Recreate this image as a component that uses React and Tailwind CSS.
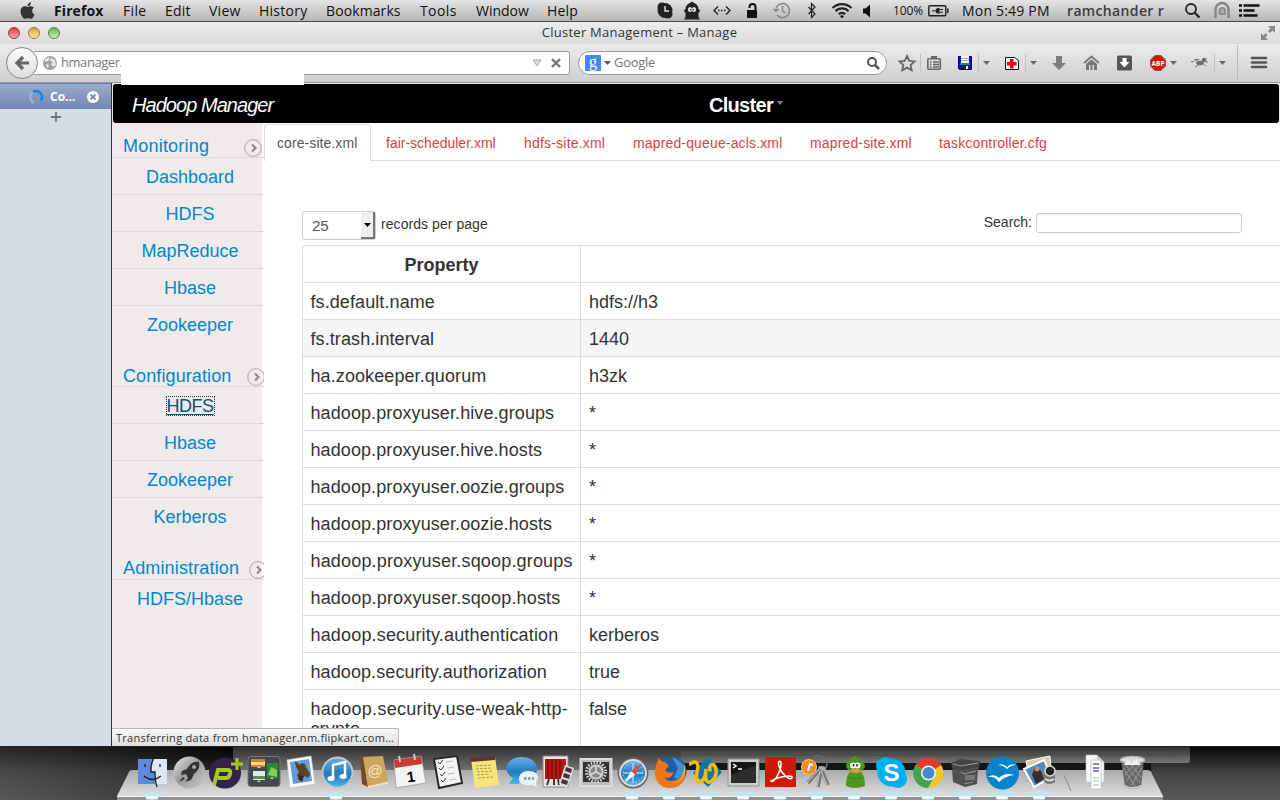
import React from 'react';
import { FaApple } from 'react-icons/fa';

const ui = "font-['Open_Sans','Noto_Sans',sans-serif]";
const body = "font-['Liberation_Sans',Arial,sans-serif]";

const menus = [
  ['File', 'w-[42px] tracking-[0.35px]'],
  ['Edit', 'w-[44px] tracking-[0.2px]'],
  ['View', 'w-[50px] tracking-[0.25px]'],
  ['History', 'w-[67px] tracking-[0.25px]'],
  ['Bookmarks', 'w-[94px] tracking-[0.1px]'],
  ['Tools', 'w-[56px] tracking-[0.4px]'],
  ['Window', 'w-[71px] tracking-[0px]'],
  ['Help', 'w-[110px] tracking-[0.2px]'],
];

function MenuBar() {
  return (
    <header className={`${ui} flex h-[22px] shrink-0 items-center border-b border-[#4a4a4a] bg-linear-to-b from-[#e4e4e4] to-[#b6b6b6] text-[14px] leading-[21px] text-[#111] whitespace-nowrap`}>
      <div className="w-[54px] pl-[18px]"><FaApple className="size-[19px] text-[#333]" /></div>
      <div className="w-[69px] font-bold tracking-[0.1px]">Firefox</div>
      {menus.map(([label, cls]) => <div key={label} className={cls}>{label}</div>)}
      <svg className="h-[21px] w-[236px] shrink-0" viewBox="657 0 236 21" fill="none" stroke="#222">
        <g stroke="none" fill="#222">
          <circle cx="662" cy="7" r="4.500" /><circle cx="668" cy="14" r="4.500" /><circle cx="665" cy="10.500" r="7.500" />
          <path d="M685.500 9a6.500 6.500 0 0 1 13 0l1.800 1.500-1.800 2.500v4l1.500 2.500h-16l1.500-2.500v-4l-1.800-2.500zM690 3l2-1.500L694 3z" />
        </g>
        <path d="M665 6v5h4" stroke="#ddd" strokeWidth="1.500" />
        <g fill="#eee" stroke="none"><ellipse cx="690" cy="9.500" rx="2" ry="2.500" /><ellipse cx="694" cy="9.500" rx="2" ry="2.500" /></g>
        <g fill="#222" stroke="none"><circle cx="690.500" cy="9.800" r=".8" /><circle cx="693.500" cy="9.800" r=".8" /></g>
        <path d="m718 6.500-4 4 4 4m8-8 4 4-4 4" strokeWidth="1.400" /><path d="M718 10.500h9" strokeWidth="1.500" strokeDasharray="1.500 1.500" />
        <rect x="747" y="10" width="10" height="8" fill="#111" stroke="none" /><path d="M755.500 10V7a3 3 0 0 0-6 0v1" stroke="#111" strokeWidth="2" />
        <g stroke="#858585" strokeWidth="1.500"><path d="M776 8a7 7 0 1 1 1 7M782.500 6v5l3 2" /><path d="m773 9 3 3 3-3z" fill="#858585" strokeWidth=".5" /></g>
        <path d="m808.500 7 6.500 7-3.500 3.500v-14L815 7l-6.500 7" strokeWidth="1.200" />
        <g strokeWidth="2.200"><path d="M832.500 8a13.500 13.500 0 0 1 19 0" /><path d="M835.500 11.200a9 9 0 0 1 13 0" /><path d="M838.700 14.200a5 5 0 0 1 6.600 0" /></g>
        <path d="m842 18.500-2-2.500q2-1.500 4 0z" fill="#111" stroke="none" />
        <path d="M863 8.500h2.500l4.500-4v13l-4.500-4H863z" fill="#111" stroke="none" />
      </svg>
      <div className="w-[34px] text-[12px] tracking-[-0.1px]">100%</div>
      <svg className="h-[21px] w-[35px] shrink-0" viewBox="0 0 35 21" fill="none">
        <rect x="1.800" y="5.800" width="17" height="10" rx="1" stroke="#222" strokeWidth="1.400" /><path d="M20.800 8.500v4.500" stroke="#222" strokeWidth="1.500" />
        <path d="M5 10.800h3.500M12.500 9.500H16M12.500 12.200H16" stroke="#222" /><path d="M12.500 7.800v6c-2.500 0-4-1-4-3s1.500-3 4-3z" fill="#222" />
      </svg>
      <div className="w-[105px] tracking-[0.2px]">Mon 5:49 PM</div>
      <div className="w-[118px] font-semibold tracking-[0.35px] text-[#3c3c3c]">ramchander r</div>
      <svg className="h-[21px] w-[80px] shrink-0" viewBox="1185 0 80 21" fill="none">
        <circle cx="1191" cy="9" r="5" stroke="#222" strokeWidth="1.800" /><path d="m1194.500 12.500 5 5" stroke="#222" strokeWidth="2.200" />
        <path d="M1215.500 18v-8.500a6.500 6.500 0 0 1 13 0V18" stroke="#888" strokeWidth="2.500" /><path d="M1219.500 14v-4a2.800 2.800 0 0 1 5.500 0v4z" fill="#aaa" stroke="#888" strokeWidth="1.700" />
        <path d="M1239 5.500h3m1.500 0h16M1239 10.500h3m1.500 0h11M1239 15.500h3m1.500 0h14" stroke="#111" strokeWidth="2.600" />
      </svg>
    </header>
  );
}

function TitleBar() {
  return (
    <div className={`${ui} flex h-[22px] shrink-0 items-center bg-linear-to-b from-[#ededed] to-[#dadada] pl-2 pr-1`}>
      <div className="flex w-[60px] gap-2">
        <i className="size-3 rounded-full border border-[#9e3b3b] bg-linear-to-b from-[#d63b3e] to-[#ffa5a0]" />
        <i className="size-3 rounded-full border border-[#a8712c] bg-linear-to-b from-[#e69b3c] to-[#ffe7a0]" />
        <i className="size-3 rounded-full border border-[#54823f] bg-linear-to-b from-[#71ac50] to-[#cff5b0]" />
      </div>
      <div className="grow text-center text-[13px] tracking-[0.26px] text-[#333]"><span className="pr-[49px]">Cluster Management – Manage</span></div>
      <svg className="h-4 w-[16px] shrink-0" viewBox="0 0 16 16" fill="#888"><path d="M8 1h7v7l-2.500-2.500L10 8 8 6l2.500-2.500zM1 8v7h7l-2.500-2.500L7.500 10l-2-2-2 2.500z" /></svg>
    </div>
  );
}

function ToolIcons() {
  return (
    <svg className="h-[39px] w-[394px] shrink-0" viewBox="886 44 394 39" fill="none">
      <path d="m907 56 2.300 4.800 5.200.6-3.900 3.600 1.100 5.200-4.700-2.600-4.700 2.600 1.100-5.200-3.900-3.600 5.200-.6z" stroke="#666" strokeWidth="1.800" />
      <path d="M920.500 54v18M978.500 54v18M1025.500 54v18M1214.500 54v18" stroke="#c3c3c3" />
      <rect x="927.800" y="58.800" width="12.500" height="10.500" rx="1" stroke="#666" strokeWidth="1.600" /><rect x="931" y="56" width="6" height="3" fill="#666" /><path d="M930 62h1.500m1.500 0h6M930 64.500h1.500m1.500 0h6M930 67h1.500m1.500 0h6" stroke="#666" strokeWidth="1.300" />
      <path d="M958.500 56.500h13v13h-12l-1-1z" fill="#0815c4" stroke="#000070" /><path d="M961 56h8v7h-8z" fill="#f3f3ef" /><path d="M961 58.500h8m-8 2h8" stroke="#aaa" /><path d="M960 63h10v2h-10z" fill="#158590" /><path d="M961 65h8v4h-8z" fill="#222" /><path d="M966 66h2v3h-2z" fill="#eee" />
      <path d="M1005.500 57.500h9l4 3v9h-13z" fill="#fff" stroke="#111" /><path d="M1010 59h3.500v3h3v3.500h-3v3H1010v-3h-3V62h3z" fill="#f00000" />
      <g fill="#6a6a6a"><path d="M983 61h7l-3.500 4zM1030 61h7l-3.500 4zM1170 61h7l-3.500 4zM1219 61h7l-3.500 4z" /><path d="M1056 56h6v7h4l-7 7-7-7h4z" fill="#7c7c7c" /></g>
      <path d="m1084 63 7.500-6.500 7.500 6.500" stroke="#777" strokeWidth="1.800" /><path d="m1086 64 5.500-4.500L1097 64v6h-3v-5h-1.500v5h-2v-5h-1.500v5h-3z" fill="#777" />
      <rect x="1117" y="55.500" width="15" height="15" rx="1.500" fill="#555" /><path d="M1122.500 58h4v4h3l-5 5.500-5-5.500h3z" fill="#fff" />
      <path d="M1155 55.500h6l4.500 4.500v6l-4.500 4.500h-6l-4.500-4.500v-6z" fill="#cc1c0a" stroke="#8e5048" /><text x="1158" y="66" fill="#fff" fontSize="6.500" fontWeight="700" textAnchor="middle" fontFamily="Open Sans, sans-serif">ABP</text>
      <g stroke="#777" strokeWidth="1"><ellipse cx="1200" cy="63" rx="3.500" ry="2" fill="#666" /><circle cx="1204" cy="60" r="2" fill="#555" stroke="none" /><path d="m1194 59.500 6 3 7-4m-3 3 4 .5m-7 1-6 4.500m8-4 3 3m-12-5h-3m4-2 4 0" /></g>
      <path d="M1237.500 45v36" stroke="#b7bcc4" /><path d="M1252 58h14m-14 4.500h14m-14 4.500h14" stroke="#555" strokeWidth="2.600" strokeLinecap="round" />
    </svg>
  );
}

function Toolbar() {
  return (
    <div className={`${ui} relative flex h-[39px] shrink-0 items-center border-b border-[#999] bg-linear-to-b from-[#ebebeb] to-[#cfcfcf] text-[13px]`}>
      <div className="z-1 ml-[6px] flex size-8 shrink-0 items-center justify-center rounded-full border border-[#858585] bg-linear-to-b from-[#fcfcfc] to-[#dedede]">
        <svg className="size-4" viewBox="0 0 16 16" fill="none" stroke="#666" strokeWidth="3.200"><path d="M9 2 3 8l6 6M3 8h12" /></svg>
      </div>
      <div className="-ml-[4px] flex h-[24px] w-[536px] shrink-0 items-center rounded-r-[3px] border border-l-0 border-[#9a9a9a] bg-white pl-[9px] text-[#777]">
        <svg className="mr-[4px] size-[14px]" viewBox="0 0 14 14"><circle cx="7" cy="7" r="7" fill="#a0a0a0" /><path d="M2 3q3-2 5-1L5 5 2 6zm6-1 4 2 1 5-3 2-2-3 2-2-3-1zM3 8l3 1-1 3-2-2z" fill="#e6e6e6" /></svg>
        <span className="w-[471px] tracking-[-0.45px]">hmanager.</span>
        <svg className="h-[14px] w-[34px] shrink-0" viewBox="0 0 34 14" fill="none"><path d="M1 4h8L5 10z" fill="#ddd" stroke="#aaa" /><path d="m20 3 8 8m0-8-8 8" stroke="#777" strokeWidth="2.400" /></svg>
      </div>
      <div className="ml-[8px] flex h-[24px] w-[309px] shrink-0 items-center rounded-full border border-[#9a9a9a] bg-white pl-[6px] text-[#757575]">
        <b className="flex size-4 items-center justify-center rounded-[1px] bg-[#4889f1] pb-[3px] font-['Liberation_Serif',serif] text-[16px] font-normal leading-4 text-white">g</b>
        <svg className="mx-[3px] h-2 w-[7px]" viewBox="0 0 7 8"><path d="M0 2h7L3.500 6z" fill="#555" /></svg>
        <span className="grow tracking-[-0.3px]">Google</span>
        <svg className="mr-[5px] size-4" viewBox="0 0 16 16" fill="none" stroke="#555" strokeWidth="2"><circle cx="7" cy="7" r="4" /><path d="m10 10 4 4" strokeWidth="2.500" /></svg>
      </div>
      <div className="-ml-px"><ToolIcons /></div>
      <div className="absolute left-[121px] top-[16px] z-2 h-[25px] w-[183px] bg-white" />
      <div className="absolute left-[132px] top-[8px] z-2 h-[12px] w-[180px] bg-white" />
    </div>
  );
}

function TabStrip() {
  return (
    <aside className={`${ui} w-[111px] shrink-0 bg-[#d4dce6]`}>
      <div className="flex h-[26px] items-center border-t border-[#6a7fae] bg-linear-to-b from-[#9aaacd] to-[#7386b2] pl-[28px] text-[12px] font-bold text-white">
        <svg className="mr-[6px] size-4" viewBox="0 0 16 16" fill="none" strokeWidth="2.500"><path d="M6 13.500A6 6 0 0 1 5 3" stroke="#91b2e3" /><path d="M5 3a6 6 0 0 1 8 8.500" stroke="#1583e9" /></svg>
        <span className="w-[37px]">Co...</span>
        <svg className="size-3" viewBox="0 0 12 12"><circle cx="6" cy="6" r="6" fill="#fff" /><path d="m3.500 3.500 5 5m0-5-5 5" stroke="#778ab5" strokeWidth="1.800" /></svg>
      </div>
      <div className="flex h-[16px] items-center justify-center"><svg className="size-[10px]" viewBox="0 0 10 10"><path d="M5 0v10M0 5h10" stroke="#777" strokeWidth="1.800" /></svg></div>
    </aside>
  );
}

const groups = [
  ['Monitoring', ['Dashboard', 'HDFS', 'MapReduce', 'Hbase', 'Zookeeper'], 'h-[35px]', '', 'tracking-[0.22px]'],
  ['Configuration', ['HDFS', 'Hbase', 'Zookeeper', 'Kerberos'], 'h-[44px]', '-mr-[3px]', 'tracking-[0.1px] relative top-px'],
  ['Administration', ['HDFS/Hbase'], 'h-[45px]', '-mr-[5px]', 'tracking-[0.15px]'],
];

function Sidebar() {
  return (
    <nav className="w-[152px] shrink-0 overflow-hidden bg-linear-to-r from-[#f0eaea] from-[150px] to-white to-[150px] text-[18px] text-[#0088cc]">
      {groups.map(([title, items, height, offset, tracking]) => (
        <section key={title}>
          <h2 className={`${height} flex items-end justify-between border-b border-[#dcdada] pl-[11px]`}>
            <span className={`${tracking} leading-[22px]`}>{title}</span>
            <svg className={`h-[18px] w-[20px] shrink-0 ${offset}`} viewBox="0 0 20 18" fill="none"><circle cx="9" cy="9" r="8.300" stroke="#b8b8b8" strokeWidth="1.300" /><path d="m8 5.500 3.500 3.500L8 12.500" stroke="#888" strokeWidth="2" /></svg>
          </h2>
          {items.map((item, i) => {
            const active = title === 'Configuration' && i === 0;
            return (
              <div key={item} className={`flex h-[37px] items-center justify-center pl-[4px] pt-[2px] ${i < items.length - 1 ? 'border-b border-[#dcdada]' : ''}`}>
                <a className={active ? '-mt-px text-[#005580] tracking-[-0.5px] underline decoration-1 underline-offset-2 outline-1 outline-dotted outline-[#333] leading-[18px]' : ''}>{item}</a>
              </div>
            );
          })}
        </section>
      ))}
    </nav>
  );
}

const wide = 'tracking-[0.17px]';
const rows = [
  ['fs.default.name', 'hdfs://h3'],
  ['fs.trash.interval', '1440'],
  ['ha.zookeeper.quorum', 'h3zk'],
  ['hadoop.proxyuser.hive.groups', '*'],
  ['hadoop.proxyuser.hive.hosts', '*'],
  ['hadoop.proxyuser.oozie.groups', '*'],
  ['hadoop.proxyuser.oozie.hosts', '*'],
  ['hadoop.proxyuser.sqoop.groups', '*', wide],
  ['hadoop.proxyuser.sqoop.hosts', '*', wide],
  ['hadoop.security.authentication', 'kerberos', wide],
  ['hadoop.security.authorization', 'true'],
  ['hadoop.security.use-weak-http-crypto', 'false'],
];

const tabs = [
  ['fair-scheduler.xml', 'w-[138px]'],
  ['hdfs-site.xml', 'w-[109px] tracking-[0.2px]'],
  ['mapred-queue-acls.xml', 'w-[177px] tracking-[0.15px]'],
  ['mapred-site.xml', 'w-[129px] tracking-[0.15px]'],
  ['taskcontroller.cfg', 'grow tracking-[0.16px]'],
];

function Content() {
  return (
    <main className="min-w-0 grow overflow-hidden bg-white text-[#333]">
      <div className="flex h-[38px] text-[14px] leading-[37px]">
        <div className="mt-px w-[107px] shrink-0 rounded-t border border-b-0 border-[#ddd] pl-[12px] tracking-[0.08px] text-[#555]">core-site.xml</div>
        <div className="flex grow border-b border-[#ddd] pl-[15px] pt-[2px] text-[#d9403f]">
          {tabs.map(([t, w]) => <a key={t} className={`h-[35px] ${w}`}>{t}</a>)}
        </div>
      </div>
      <div className="ml-[38px] mt-[49px] flex h-[35px] w-[940px] items-start justify-between text-[14px]">
        <label className="flex items-center pt-px">
          <span className="flex h-[29px] w-[74px] items-center justify-between rounded-[3px] border border-[#ccc] pl-[9px] text-[15px] text-[#555]"><span className="pt-[2px]">25</span>
            <span className="flex h-[27px] w-[14px] items-center justify-center border-b-2 border-r-2 border-[#777] bg-[#eee]"><svg className="h-[4px] w-[7px]" viewBox="0 0 7 4"><path d="M0 0h7L3.500 4z" fill="#000" /></svg></span>
          </span>
          <span className="-mt-[2px] ml-[5px] tracking-[0.06px]">records per page</span>
        </label>
        <label className="flex items-center pt-[2px]">Search:<span className="ml-[4px] h-[20px] w-[206px] rounded-[3px] border border-[#ccc] bg-white shadow-[inset_0_1px_1px_rgba(0,0,0,0.08)]" /></label>
      </div>
      <div className="-mr-2 ml-[38px] rounded-tl border-l border-t border-[#ddd] text-[18px] leading-[20px]">
        <div className="grid h-[36px] grid-cols-[277px_1fr] text-center font-bold"><div className="pt-[9px]">Property</div><div className="border-l border-[#ddd]" /></div>
        {rows.map(([name, value, spacing = 'tracking-[0.09px]'], i) => (
          <div key={name} className={`grid min-h-[37px] grid-cols-[277px_1fr] border-t border-[#ddd] ${i === 1 ? 'bg-[#f5f5f5]' : ''}`}>
            <div className={`whitespace-nowrap pb-[7px] pl-[7.500px] pt-[9px] ${spacing}`}>{i === 11 ? <><span className="tracking-[0.26px]">hadoop.security.use-weak-http-</span><br />crypto</> : name}</div>
            <div className="border-l border-[#ddd] pl-[8px] pt-[9px]">{value}</div>
          </div>
        ))}
      </div>
    </main>
  );
}

/* Dock artwork: every icon sits on a 37x53 cell centred at 18.5,26 */
const dockIcons = [
  <><rect x="4" y="12" width="29" height="25" rx="1" fill="#dfe7f5" /><path d="M4 12h16q-3 8-2 13h3v12H4z" fill="#5d8bdb" /><path d="M21 9q-5 8-4 16h4q0 9 2 15M10 29q8 7 17 0M11 17v3M26 17v3" fill="none" stroke="#222" strokeWidth="1.300" /></>,
  <><circle cx="18.500" cy="25.500" r="16" fill="url(#metal)" /><path d="M28 15c-6-1-10 3-12 7l-5 2-1 4 5-1 2 4-3 4 6-2 3-6c5-4 6-7 5-12zm-16 15-4 5 6-3z" fill="#333" /><circle cx="23" cy="20" r="2" fill="#aaa" /></>,
  <><ellipse cx="17" cy="26" rx="16" ry="15.500" fill="#33224c" /><path d="m6 38 4-15h10q3 0 2 4t-4 4h-8" fill="none" stroke="#a6c72c" strokeWidth="4" /><path d="M29 11v12m-6-6h12" stroke="#a6c72c" strokeWidth="3" /></>,
  <><rect x="3" y="9.500" width="32" height="30" rx="3" fill="#444950" stroke="#777" /><rect x="6" y="12" width="14" height="8" fill="#e27b21" /><path d="M6 15h14v3H6z" fill="#f5d69b" /><rect x="22" y="16" width="11" height="15" fill="#238b32" /><path d="m23 28 3-8 6 3v7z" fill="#8acb59" /><rect x="8" y="24" width="12" height="9" fill="#dfeae7" /><path d="M8 29h12v3H8z" fill="#54914d" /><path d="m12 21 2-2 2 2zm0 14 2-2 2 2zm13-3 2-2 2 2z" fill="#ccc" /></>,
  <><path d="m5 13 24-4 4 28-25 4z" fill="#fafafa" stroke="#ccc" strokeDasharray="2 1" /><path d="m8 15 19-3 3 22-19 3z" fill="#669bd7" /><path d="m13 14 5 4 2-2 3 1 1 3 4 7-2 4-4-2-6 2-1-3 2-3-3-5z" fill="#5c4228" /><path d="m17 28 5 1-2 6-4-3z" fill="#342b20" /></>,
  <><circle cx="18.500" cy="25.500" r="15" fill="url(#blue)" stroke="#c1c4ca" strokeWidth="2" /><path d="M14 31V18l12-3v14" fill="none" stroke="#fff" strokeWidth="2.500" /><ellipse cx="12" cy="31.500" rx="3.500" ry="2.500" fill="#fff" /><ellipse cx="24" cy="29.500" rx="3.500" ry="2.500" fill="#fff" /></>,
  <><path d="m4 10 3-1 5 31-6-3z" fill="#744a23" /><path d="m7 10 20-1 5 25-20 6z" fill="#d1a45b" /><path d="m12 39 20-4v2l-20 4z" fill="#eee2c2" /><text x="19" y="29" textAnchor="middle" fontSize="15" fill="#f4e8d0" fontFamily="Liberation Sans">@</text></>,
  <><path d="m1 13 27-4 5 27-30 5z" fill="#f4f4f4" stroke="#aaa" /><path d="m1 13 27-4 1 8-27 4z" fill="#c63d36" /><path d="m6 9 1 6m14-8 1 6" stroke="#ccc" strokeWidth="2" /><text x="18" y="35" textAnchor="middle" fontSize="15" fontWeight="700" transform="rotate(-8 18 30)" fontFamily="Liberation Sans">1</text></>,
  <><path d="m4 12 23-3 5 27-23 5z" fill="#f4f4f4" stroke="#292929" strokeWidth="2" /><path d="m8 15 2 2 3-4M9 21l2 2 3-4M10 27l2 2 3-4M11 33l2 2 3-4" fill="none" stroke="#333" /><path d="m16 15 7-1m-6 7 7-1m-6 7 7-1m-6 7 7-1" stroke="#bbb" /></>,
  <><path d="m4 12 24-2 4 28-24 3z" fill="#f5e57d" /><path d="m3 11 25-2v4L4 15z" fill="#63352a" /><path d="m9 19 16-1m-16 4 16-1m-15 4 15-1m-15 4 11-1m-10 4 15-1" stroke="#aea04b" strokeDasharray="3 1" /></>,
  <><path d="M17 10c11 0 16 6 16 12s-6 11-14 11l-5 4H5l4-6C-2 25 1 11 17 10z" fill="url(#blue)" /><path d="M24 24c7 0 10 3 10 7l-2 5 1 4-5-2c-7 1-13-1-13-6s4-8 9-8z" fill="#e4f3fb" /><path d="M20 31.500h10" stroke="#7994a7" strokeWidth="2.500" strokeDasharray="2.500 1.500" /></>,
  <><path d="M2 9h25v31H2z" fill="#e6e6e6" stroke="#888" /><path d="M4 12h21v20H4z" fill="#b51912" /><path d="M7 12v20m4-20v20m4-20v20m4-20v20" stroke="#7d0d08" strokeWidth="1.500" /><path d="m8 32-2 6m7-6v6m4-6 1 6" stroke="#493528" strokeWidth="2" /><path d="m24 18 9 3-7 20-8-4z" fill="#ddd" /><path d="m25 20 6 2-1 4-6-2zm-2 6 6 2-1 4-6-2zm-2 6 6 2-1 4-6-2z" fill="#48312e" /></>,
  <><rect x="2.500" y="12" width="31" height="27" fill="#b9bdbf" stroke="#ddd" strokeWidth="2" /><rect x="5" y="15" width="26" height="20" fill="#333" /><circle cx="18" cy="25" r="9.500" fill="none" stroke="#ddd" strokeWidth="3" strokeDasharray="1.500 1.500" /><circle cx="18" cy="25" r="8" fill="#ccc" stroke="#777" /><circle cx="18" cy="25" r="5.500" fill="#888" /><path d="M18 25v-6m0 6 6 3m-6-3-6 3" stroke="#ddd" strokeWidth="1.500" /></>,
  <><circle cx="18" cy="26" r="14.700" fill="#ddd" stroke="#666" strokeWidth="1.500" /><circle cx="18" cy="26" r="12" fill="url(#blue)" /><circle cx="18" cy="26" r="10" fill="none" stroke="#d5e9f7" strokeDasharray="1 3" /><path d="M18 16v20M8 26h20" stroke="#a9d1ef" strokeWidth="1.500" /><path d="m27 16-7 12-4-4z" fill="#e5482d" /><path d="m9 36 7-12 4 4z" fill="#fff" /></>,
  <><circle cx="20" cy="24" r="14.500" fill="#1b60a5" /><path d="M20 10q8 3 13 10c1 6 0 12-3 15l-8-5 4-9z" fill="#4293d3" /><path d="m5 16 2-5q2 4 6 4l4 4-4 4q3 4 8 2c0 7-9 7-9 4 3 9 19 5 20-6C36 35 27 41 18 41 6 41-1 29 5 16z" fill="#ee7518" /><path d="M32 17c4 12-4 19-12 19q10-1 12-12z" fill="#f9c33b" /></>,
  <><path d="m18 10 15 15-14 15L4 26z" fill="#1374a9" /><path d="M1 17c6-4 8-1 8 3-1 5-3 13 0 15q7 1 8-13c-1 10 0 14 4 13q7-4 6-12c-1-9-8-5-6 0" fill="none" stroke="#f1bb13" strokeWidth="3.500" strokeLinecap="round" /></>,
  <><path d="M2 12h31v27H2z" fill="#ccc" stroke="#909090" /><path d="M5 15h25v21H5z" fill="#151515" /><path d="M5 28 30 18v18H5z" fill="#2d2d2d" /><path d="m7 17 3 2-3 2m5 1h4" fill="none" stroke="#fff" strokeWidth="1.500" /></>,
  <><path d="M2 10h31v30H2z" fill="#cf1908" /><path d="M8 34c3 3 10-10 10-17 0-4-4-4-2 2 2 7 10 15 13 12 2-4-15-1-21 3z" fill="none" stroke="#fff" strokeWidth="1.500" /></>,
  <><path d="M12 18C10 6 25 6 27 16c0 7-7 9-8 3" fill="none" stroke="#666" strokeWidth="1.800" /><circle cx="9" cy="20" r="7.500" fill="#f28b23" stroke="#ffc072" /><path d="m8 24 2-7 3 1" fill="none" stroke="#fff" strokeWidth="2" /><circle cx="22" cy="23" r="4" fill="#aaa" /><path d="m20 22-12 14m13-12-3 16m4-16 6 14" stroke="#777" strokeWidth="3.500" /><path d="m19 22-12 14m13-12-3 16m4-16 6 14" stroke="#ccc" /></>,
  <><path d="m18 9 4 3q6 2 6 8l-4 5q4 3 4 14-10 4-19 0 0-11 4-14l-4-5q0-6 5-8z" fill="#4d9624" /><path d="M12 30q6 4 13 0" fill="none" stroke="#387d18" /><circle cx="16" cy="18.500" r="3" fill="#fff" /><circle cx="20.500" cy="18.500" r="3" fill="#fff" /><path d="M16.500 17v2.500m3.500-2.500v2.500" stroke="#222" strokeWidth="1.500" /><path d="M12 24q6-5 13 0-6 4-13 0" fill="#df994a" /></>,
  <><circle cx="11" cy="19" r="9" fill="#00aff0" /><circle cx="24" cy="32" r="9" fill="#00aff0" /><circle cx="17.500" cy="25.500" r="14" fill="#00aff0" /><text x="17.500" y="34" textAnchor="middle" fontSize="24" fontWeight="700" fill="#fff" fontFamily="Liberation Sans">S</text></>,
  <><circle cx="17.500" cy="26" r="15" fill="#f2c52e" /><path d="M17.500 26 4.500 18a15 15 0 0 1 26 0z" fill="#de3f31" /><path d="m17.500 26-13-8A15 15 0 0 0 17 41l5-9z" fill="#46a34b" /><circle cx="17.500" cy="26" r="7.500" fill="#f6f6f6" /><circle cx="17.500" cy="26" r="6" fill="#4289d1" /></>,
  <><path d="m3 16 9-4 20 2-1 8-21 2-6-3z" fill="#444" /><path d="m4 22 11 1 15-3-1 17-12 3-12-5z" fill="#505050" /><path d="m5 17 8 2 17-3m-17 9 3 2 12-3m-11 8 10-2m-11 7 9-2" fill="none" stroke="#999" /><path d="M17 28h10v5H17z" fill="#777" /></>,
  <><circle cx="17.500" cy="26" r="16.500" fill="#0784cd" /><path d="M13 18q5-2 9 2 4-4 9-2-5 0-9 4-4-4-9-4zM2 30q8-4 12 1 6-6 15-3-9 1-15 7-4-6-12-5z" fill="#fff" /></>,
  <><path d="m4 14 24-5 1 12-23 5z" fill="#d9caab" stroke="#fff" /><path d="m2 22 20-9 8 17-18 10z" fill="#568ac1" stroke="#fff" strokeWidth="2" /><path d="m10 28 3-8 6 4 3 8-8 5z" fill="#3b2c2b" /><circle cx="15" cy="22" r="2.500" fill="#c98d6c" /><path d="M22 24q6-2 11 0v11q-6 4-11 0z" fill="#777" /><circle cx="28" cy="24" r="5" fill="#222" stroke="#ddd" strokeWidth="1.500" /><path d="M23 32q5 3 9 0" fill="none" stroke="#ddd" strokeWidth="2" /></>,
];
const files = [
  <><path d="M9 8h11l7 7v20H9z" fill="#f7f7f7" stroke="#bbb" strokeWidth=".7" /><path d="M20 8v7h7z" fill="#ccc" /><path d="M14 13h10v29H14z" fill="#fff" stroke="#ccc" /><path d="M16 17h6m-6 4h6m-6 3h6" stroke="#6268a1" strokeWidth="1.500" /><path d="M16 31h6m-6 3h6m-6 4h6" stroke="#9bc0b8" /></>,
  <><path d="M7 13h23l-3 27q-8 4-16 0z" fill="#696969" /><path d="m10 16 16 20M14 14l13 16M9 21l12 18M27 16 12 34M22 15 11 28M28 21 17 39" stroke="#999" /><ellipse cx="18.500" cy="13" rx="12" ry="3.500" fill="#ddd" stroke="#aeb4bd" strokeWidth="1.500" /><path d="m10 18 3-5 5 3 4-4 5 6" fill="#eee" /><path d="M11 39q7 4 16 0" fill="none" stroke="#ccc" strokeWidth="2" /></>,
];
const Cell = ({ children }) => <svg className="h-[53px] w-[37px] shrink-0" viewBox="0 0 37 53">{children}</svg>;

function Dock() {
  return (
    <footer className="relative h-[53px] shrink-0 overflow-hidden bg-[#484848]">
      <svg className="absolute inset-0 h-[53px] w-[1280px]" viewBox="0 0 1280 53">
        <defs>
          <linearGradient id="desk" x2="0" y2="1"><stop stopColor="#070707" /><stop offset=".5" stopColor="#444" /><stop offset="1" stopColor="#595959" /></linearGradient>
          <linearGradient id="left"><stop stopColor="#555" stopOpacity=".4" /><stop offset="1" stopColor="#000" stopOpacity=".5" /></linearGradient>
          <linearGradient id="win" x2="0" y2="1"><stop stopColor="#303030" /><stop offset="1" stopColor="#777" /></linearGradient>
          <linearGradient id="shelf" x2="0" y2="1"><stop stopColor="#aaa" /><stop offset="1" stopColor="#dedede" /></linearGradient>
          <linearGradient id="metal" x2="1" y2="1"><stop stopColor="#eee" /><stop offset=".45" stopColor="#999" /><stop offset="1" stopColor="#ccc" /></linearGradient>
          <linearGradient id="blue" x2="0" y2="1"><stop stopColor="#69b0e9" /><stop offset=".55" stopColor="#237abe" /><stop offset="1" stopColor="#4eb8e5" /></linearGradient>
        </defs>
        <path d="M0 0h1280v53H0z" fill="url(#desk)" /><path d="M0 0h233v53H0z" fill="url(#left)" />
        <path d="M233 0h448v25H233z" fill="url(#win)" />
        <path d="M681 16h470v8H681z" fill="#151515" />
        <path d="M681 0h509v13q0 3-3 3H681z" fill="url(#win)" /><path d="M681 8h495V0" fill="none" stroke="#484848" />
        <path d="M133 23h1014q4 0 5 4l11 22H117l11-22q1-4 5-4z" fill="url(#shelf)" />
        <path d="M117 49h1046v4H117z" fill="#929292" /><path d="M117 49.500h1046" stroke="#f1f1f1" />
        <path d="m1064 28 7 16" stroke="#888" />
        {[152, 336, 632, 669, 706, 743, 780, 817, 854, 891, 928, 965, 1002, 1039].map((x) => (
          <g key={x}><ellipse cx={x} cy="47" rx="13" ry="4" fill="#b9e8fa" opacity=".5" /><rect x={x - 6} y="49" width="12" height="3.500" rx="1.500" fill="#e8fbff" /></g>
        ))}
      </svg>
      <div className="relative flex pl-[133.500px]">
        {dockIcons.map((icon, i) => <Cell key={i}>{icon}</Cell>)}
        <span className="w-[18px]" />
        {files.map((icon, i) => <Cell key={i}>{icon}</Cell>)}
      </div>
    </footer>
  );
}

export default function App() {
  return (
    <div className="flex h-[800px] w-[1280px] flex-col overflow-hidden bg-[#333]">
      <MenuBar />
      <TitleBar />
      <Toolbar />
      <div className="relative flex h-[664px] shrink-0 overflow-hidden border-b border-[#222]">
        <TabStrip />
        <div className={`${body} flex min-w-0 grow flex-col border-l border-[#333] bg-[#e8e8e8]`}>
          <div className="ml-px mr-px mt-px flex h-[39px] shrink-0 items-center rounded-[3px] bg-black pt-[2px] text-white">
            <div className="w-[596px] pl-[19px] text-[20px] italic tracking-[-0.95px]">Hadoop Manager</div>
            <div className="text-[20px] font-bold tracking-[-0.7px]">Cluster</div>
            <svg className="-mt-[4px] ml-[4px] h-[4px] w-[6px]" viewBox="0 0 6 4"><path d="M0 0h6L3 4z" fill="#888" /></svg>
          </div>
          <div className="flex min-h-0 grow overflow-hidden bg-white"><Sidebar /><Content /></div>
        </div>
        <div className={`${ui} absolute bottom-0 left-[112px] h-[18px] w-[287px] rounded-tr-[3px] border-r border-t border-[#b5b5b5] bg-linear-to-b from-[#f8f8f8] to-[#dedede] pl-[4px] text-[11px] leading-[18px] tracking-[0.28px] text-[#333] whitespace-nowrap`}>Transferring data from hmanager.nm.flipkart.com…</div>
      </div>
      <Dock />
    </div>
  );
}
